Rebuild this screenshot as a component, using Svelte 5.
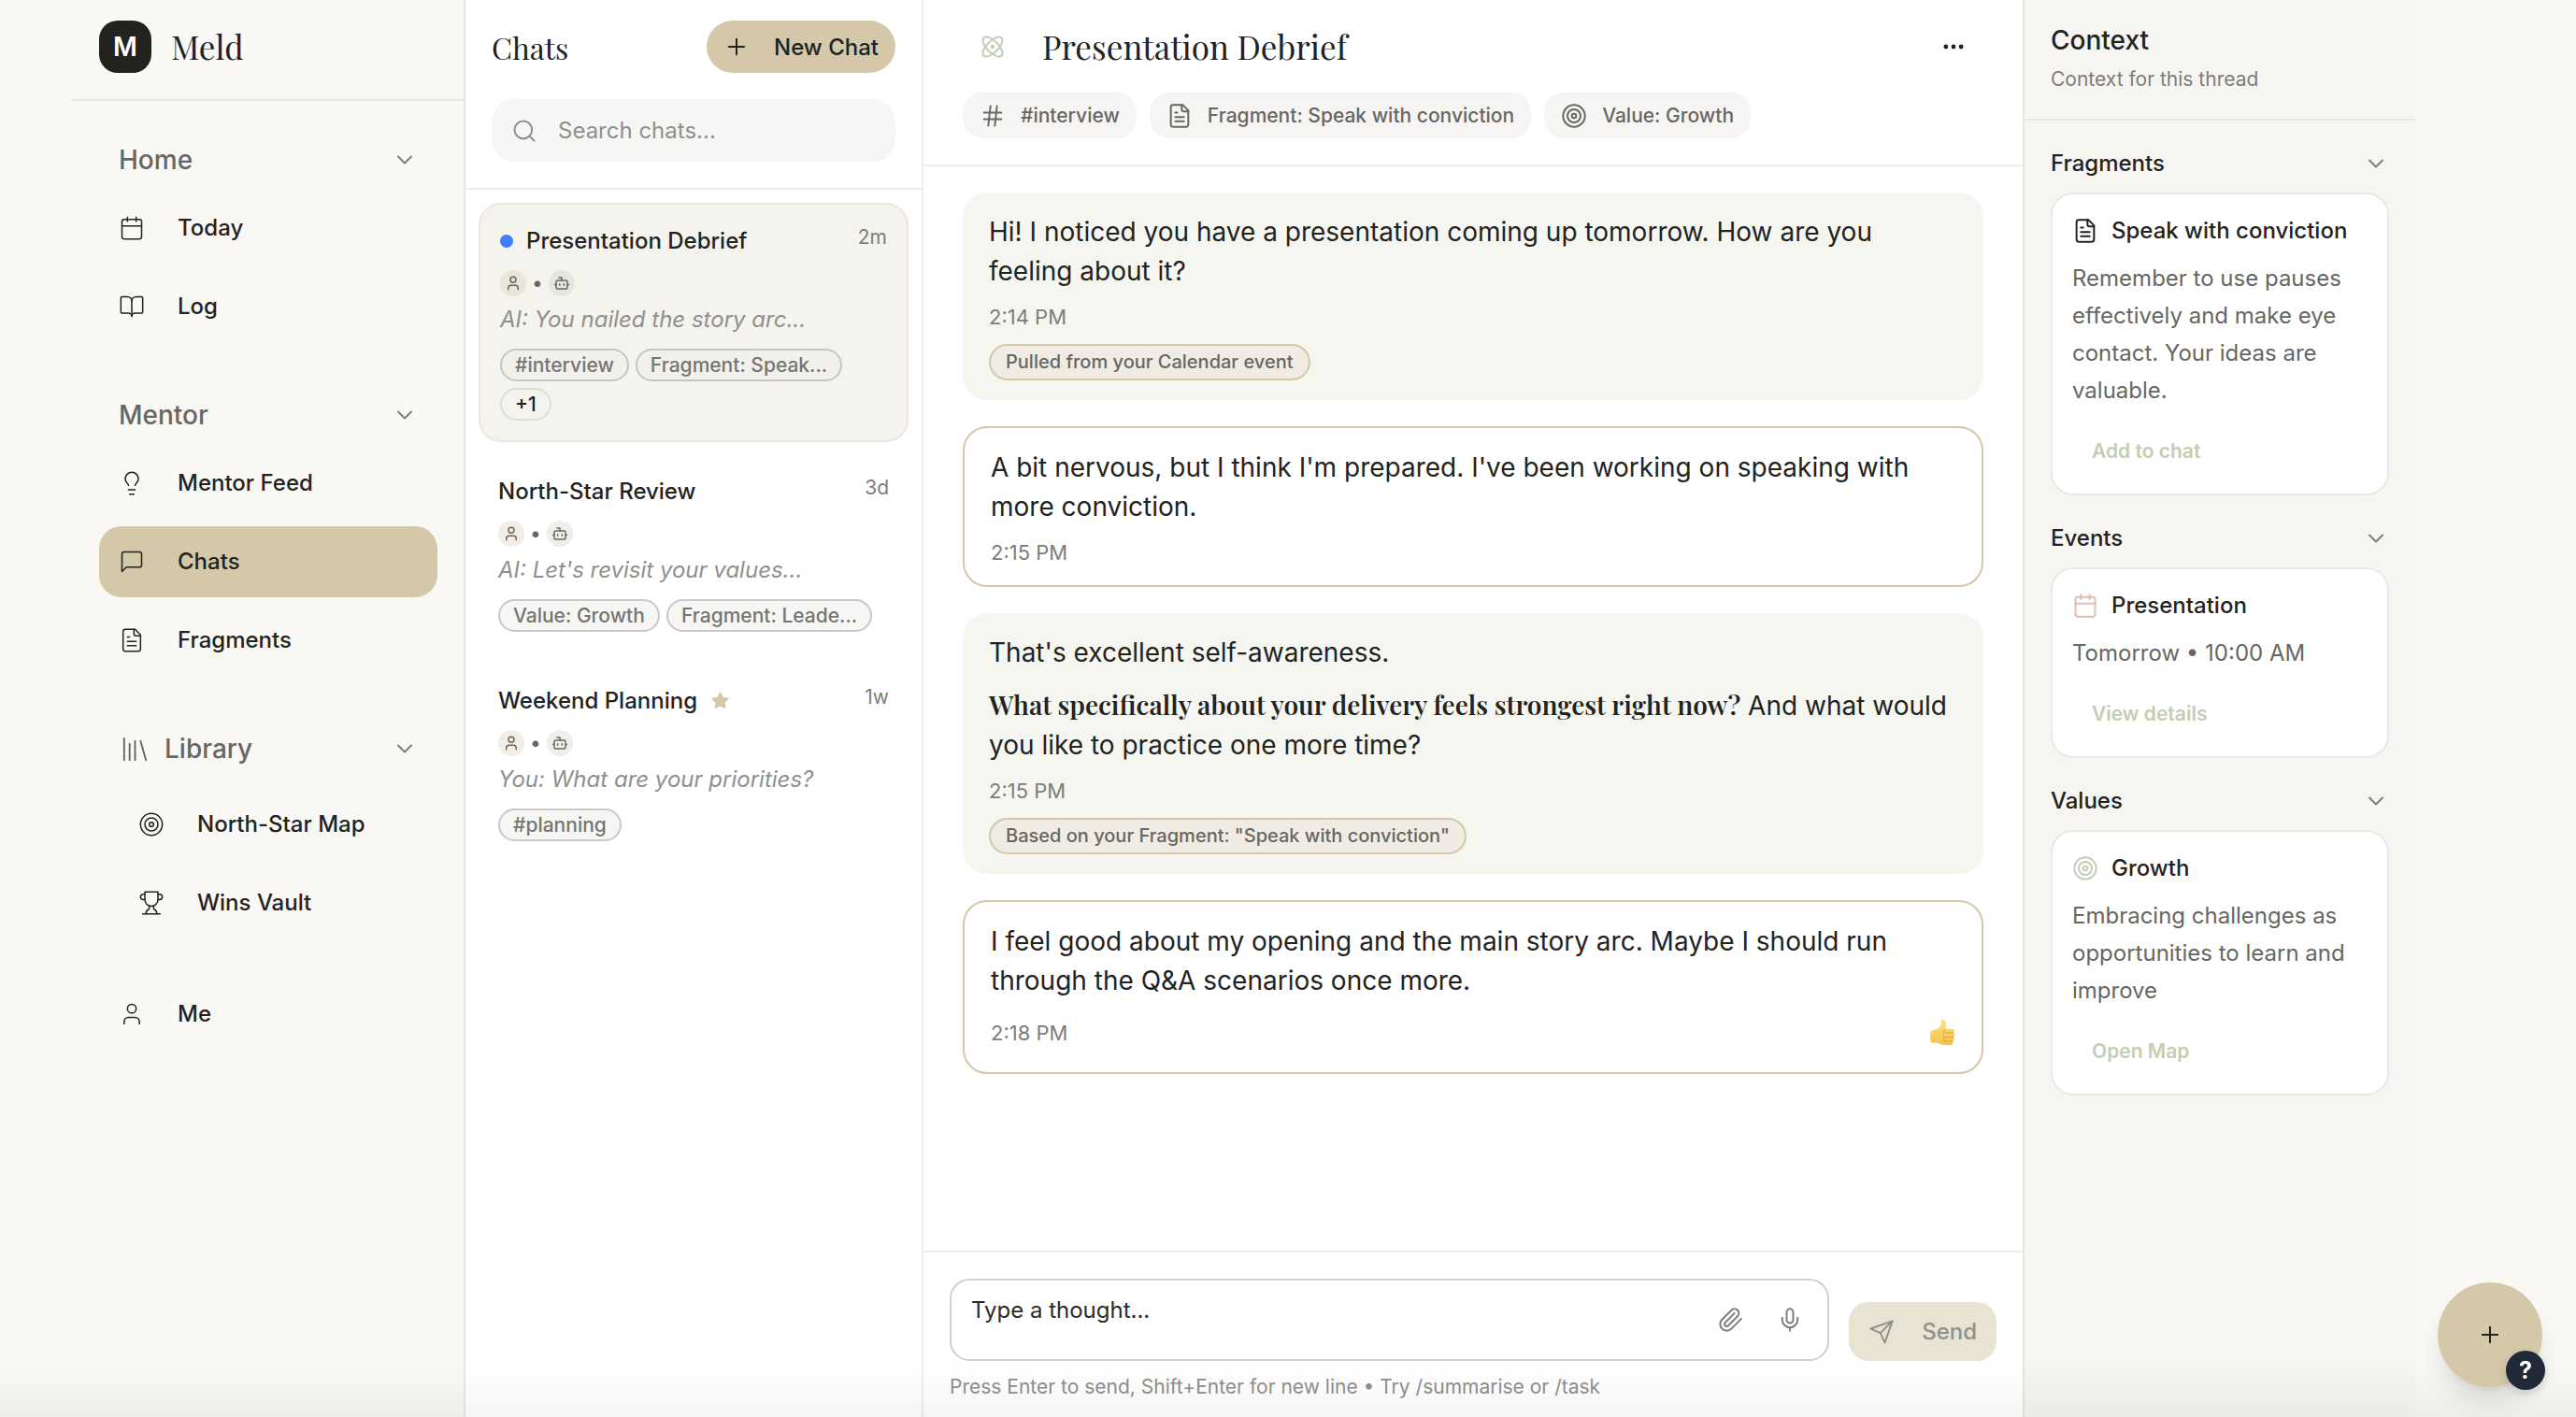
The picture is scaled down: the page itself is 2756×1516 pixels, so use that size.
<script lang="ts">
  const icons: Record<string, string> = {
    calendar: '<path d="M8 2v4M16 2v4M3 10h18"/><rect width="18" height="18" x="3" y="4" rx="2"/>',
    book: '<path d="M12 7v14"/><path d="M3 18a1 1 0 0 1-1-1V4a1 1 0 0 1 1-1h5a4 4 0 0 1 4 4 4 4 0 0 1 4-4h5a1 1 0 0 1 1 1v13a1 1 0 0 1-1 1h-6a3 3 0 0 0-3 3 3 3 0 0 0-3-3z"/>',
    bulb: '<path d="M15 14c.2-1 .7-1.7 1.5-2.5 1-.9 1.5-2.2 1.5-3.5A6 6 0 0 0 6 8c0 1 .2 2.2 1.5 3.5.7.7 1.3 1.5 1.5 2.5"/><path d="M9 18h6M10 22h4"/>',
    message: '<path d="M21 15a2 2 0 0 1-2 2H7l-4 4V5a2 2 0 0 1 2-2h14a2 2 0 0 1 2 2z"/>',
    file: '<path d="M15 2H6a2 2 0 0 0-2 2v16a2 2 0 0 0 2 2h12a2 2 0 0 0 2-2V7Z"/><path d="M14 2v4a2 2 0 0 0 2 2h4M10 9H8M16 13H8M16 17H8"/>',
    library: '<path d="m16 6 4 14M12 6v14M8 8v12M4 4v16"/>',
    target: '<circle cx="12" cy="12" r="10"/><circle cx="12" cy="12" r="6"/><circle cx="12" cy="12" r="2"/>',
    trophy: '<path d="M6 9H4.5a2.5 2.5 0 0 1 0-5H6M18 9h1.5a2.5 2.5 0 0 0 0-5H18M4 22h16"/><path d="M10 14.66V17c0 .55-.47.98-.97 1.21C7.85 18.75 7 20.24 7 22M14 14.66V17c0 .55.47.98.97 1.21C16.15 18.75 17 20.24 17 22"/><path d="M18 2H6v7a6 6 0 0 0 12 0V2Z"/>',
    user: '<path d="M19 21v-2a4 4 0 0 0-4-4H9a4 4 0 0 0-4 4v2"/><circle cx="12" cy="7" r="4"/>',
    bot: '<path d="M12 8V4H8"/><rect width="16" height="12" x="4" y="8" rx="2"/><path d="M2 14h2M20 14h2M15 13v2M9 13v2"/>',
    chevron: '<path d="m6 9 6 6 6-6"/>',
    plus: '<path d="M5 12h14M12 5v14"/>',
    search: '<circle cx="11" cy="11" r="8"/><path d="m21 21-4.3-4.3"/>',
    atom: '<circle cx="12" cy="12" r="1"/><path d="M20.2 20.2c2.04-2.03.02-7.36-4.5-11.9-4.54-4.52-9.87-6.54-11.9-4.5-2.04 2.03-.02 7.36 4.5 11.9 4.54 4.52 9.87 6.54 11.9 4.5Z"/><path d="M15.7 15.7c4.52-4.54 6.54-9.87 4.5-11.9-2.03-2.04-7.36-.02-11.9 4.5-4.52 4.54-6.54 9.87-4.5 11.9 2.03 2.04 7.36.02 11.9-4.5Z"/>',
    hash: '<path d="M4 9h16M4 15h16M10 3 8 21M16 3l-2 18"/>',
    more: '<g fill="currentColor"><circle cx="12" cy="12" r="1.2"/><circle cx="19" cy="12" r="1.2"/><circle cx="5" cy="12" r="1.2"/></g>',
    clip: '<path d="m21.44 11.05-9.19 9.19a6 6 0 0 1-8.49-8.49l8.57-8.57A4 4 0 1 1 18 8.84l-8.59 8.57a2 2 0 0 1-2.83-2.83l8.49-8.48"/>',
    mic: '<path d="M12 2a3 3 0 0 0-3 3v7a3 3 0 0 0 6 0V5a3 3 0 0 0-3-3Z"/><path d="M19 10v2a7 7 0 0 1-14 0v-2M12 19v3"/>',
    send: '<path d="m22 2-7 20-4-9-9-4ZM22 2 11 13"/>',
    star: '<path fill="currentColor" stroke-width="2.5" d="m12 3.200 2.700 5.800 6.300.8-4.600 4.300 1.200 6.200-5.600-3.100-5.600 3.100 1.200-6.200L3 9.800 9.300 9z"/>',
  };

  const groups = [
    { label: 'Home', items: [['calendar', 'Today'], ['book', 'Log']] },
    { label: 'Mentor', items: [['bulb', 'Mentor Feed'], ['message', 'Chats'], ['file', 'Fragments']] },
    { label: 'Library', icon: 'library', nested: true, items: [['target', 'North-Star Map'], ['trophy', 'Wins Vault']] },
  ];

  const chats = [
    { title: 'Presentation Debrief', time: '2m', preview: 'AI: You nailed the story arc...', tags: ['#interview', 'Fragment: Speak...'], more: '+1', unread: true, active: true },
    { title: 'North-Star Review', time: '3d', preview: "AI: Let's revisit your values...", tags: ['Value: Growth', 'Fragment: Leade...'] },
    { title: 'Weekend Planning', time: '1w', preview: 'You: What are your priorities?', tags: ['#planning'], starred: true },
  ];

  const links = [['hash', '#interview'], ['file', 'Fragment: Speak with conviction'], ['target', 'Value: Growth']];

  const context = [
    { heading: 'Fragments', icon: 'file', tone: 'ink', title: 'Speak with conviction', body: 'Remember to use pauses effectively and make eye contact. Your ideas are valuable.', action: 'Add to chat' },
    { heading: 'Events', icon: 'calendar', tone: 'rose', title: 'Presentation', body: 'Tomorrow • 10:00 AM', action: 'View details' },
    { heading: 'Values', icon: 'target', tone: 'sage', title: 'Growth', body: 'Embracing challenges as opportunities to learn and improve', action: 'Open Map' },
  ];

  let query = $state('');
  let draft = $state('');
</script>

{#snippet icon(name: string, cls = '')}
  <svg class="icon {cls}" viewBox="0 0 24 24" aria-hidden="true">{@html icons[name]}</svg>
{/snippet}

<div class="app">
  <aside class="sidebar">
    <div class="brand">
      <span class="logo">M</span>
      <span class="wordmark">Meld</span>
    </div>
    <nav>
      {#each groups as group}
        <section class="group">
          <button class="group-head">
            {#if group.icon}{@render icon(group.icon, 'large thin')}{/if}
            <span>{group.label}</span>
            {@render icon('chevron', 'push')}
          </button>
          <div class="links" class:nested={group.nested}>
            {#each group.items as [glyph, label]}
              <a href="#{label}" class="nav-link" class:active={label === 'Chats'}>
                {@render icon(glyph, 'thin')}
                <span>{label}</span>
              </a>
            {/each}
          </div>
        </section>
      {/each}
      <a href="#Me" class="nav-link">{@render icon('user', 'thin')}<span>Me</span></a>
    </nav>
  </aside>

  <section class="threads">
    <header class="threads-head">
      <div class="row">
        <h2>Chats</h2>
        <button class="new-chat">{@render icon('plus')}<span>New Chat</span></button>
      </div>
      <label class="search">
        {@render icon('search')}
        <input type="text" placeholder="Search chats..." aria-label="Search chats" bind:value={query} />
      </label>
    </header>
    <div class="thread-list">
      {#each chats as chat}
        <button class="thread" class:current={chat.active}>
          <span class="thread-top">
            {#if chat.unread}<span class="unread"></span>{/if}
            <span class="thread-title">{chat.title}</span>
            {#if chat.starred}{@render icon('star', 'small gold')}{/if}
            <time>{chat.time}</time>
          </span>
          <span class="people">
            <span class="avatar human">{@render icon('user', 'tiny')}</span>
            <span class="sep">•</span>
            <span class="avatar robot">{@render icon('bot', 'tiny')}</span>
          </span>
          <span class="preview">{chat.preview}</span>
          <span class="tags">
            {#each chat.tags as tag}<span class="tag">{tag}</span>{/each}
            {#if chat.more}<span class="tag count">{chat.more}</span>{/if}
          </span>
        </button>
      {/each}
    </div>
  </section>

  <main class="conversation">
    <header class="conv-head">
      <div class="conv-title">
        <span class="atom">{@render icon('atom')}</span>
        <h1>Presentation Debrief</h1>
        <button class="more" aria-label="More options">{@render icon('more')}</button>
      </div>
      <div class="conv-links">
        {#each links as [glyph, label]}
          <button class="chip">{@render icon(glyph)}<span>{label}</span></button>
        {/each}
      </div>
    </header>

    <div class="messages">
      <article class="msg ai">
        <p>Hi! I noticed you have a presentation coming up tomorrow. How are you feeling about it?</p>
        <div class="meta"><time>2:14 PM</time></div>
        <span class="source">Pulled from your Calendar event</span>
      </article>
      <article class="msg me">
        <p>A bit nervous, but I think I'm prepared. I've been working on speaking with more conviction.</p>
        <div class="meta"><time>2:15 PM</time></div>
      </article>
      <article class="msg ai">
        <p>That's excellent self-awareness.</p>
        <p><strong>What specifically about your delivery feels strongest right now?</strong> And what would you like to practice one more time?</p>
        <div class="meta"><time>2:15 PM</time></div>
        <span class="source">Based on your Fragment: "Speak with conviction"</span>
      </article>
      <article class="msg me">
        <p>I feel good about my opening and the main story arc. Maybe I should run through the Q&amp;A scenarios once more.</p>
        <div class="meta">
          <time>2:18 PM</time>
          <button class="reaction" aria-label="Thumbs up">
            <svg viewBox="0 0 28 26" preserveAspectRatio="none" aria-hidden="true">
              <defs>
                <linearGradient id="skin" x1="0" y1="0" x2="0" y2="1">
                  <stop offset="0" stop-color="#fde07a" />
                  <stop offset="1" stop-color="#f5c24c" />
                </linearGradient>
              </defs>
              <path fill="url(#skin)" d="M2 12c1-1.600 4.500-1.400 6.500-2.600C11 8 13.500 6 12.600 3.300 12.200 1.600 13 .6 14.600.7c2.800.2 3.900 3 3.400 5.800-.2 1.300-.6 2-.6 2.800h7.400c2.300 0 2.700 3 1 3.700 2 .8 1.700 3.700 0 4.100 1.400 1 .9 3.400-.7 3.800.9 1 .3 3.200-1.600 3.300-3.500.4-8 .4-11-.5-2.500-.7-3.500-1.500-6-1.500-2.200 0-4 .3-4.700-1C.8 18.500.9 14 2 12z" />
              <path fill="none" stroke="#d99b33" stroke-width=".8" stroke-linecap="round" d="M17.500 13h8M17.200 17.100h8.300M17 20.900h7.700M17.300 9.600c-1.500 1-2 2.500-1.200 3.600-.8 1.300-.8 3 .2 4-.6 1.200-.5 2.700.4 3.600" />
            </svg>
          </button>
        </div>
      </article>
    </div>

    <footer class="composer">
      <div class="compose-row">
        <div class="field">
          <textarea rows="1" placeholder="Type a thought..." aria-label="Message" bind:value={draft}></textarea>
          <button aria-label="Attach file">{@render icon('clip')}</button>
          <button aria-label="Record voice">{@render icon('mic')}</button>
        </div>
        <button class="send">{@render icon('send')}<span>Send</span></button>
      </div>
      <p class="hint">Press Enter to send, Shift+Enter for new line • Try /summarise or /task</p>
    </footer>
  </main>

  <aside class="context">
    <header>
      <h2>Context</h2>
      <p>Context for this thread</p>
    </header>
    <div class="context-body">
      {#each context as item}
        <section>
          <button class="context-head"><span>{item.heading}</span>{@render icon('chevron', 'push')}</button>
          <div class="card">
            <h3>{@render icon(item.icon, item.tone)}<span>{item.title}</span></h3>
            <p>{item.body}</p>
            <button class="action">{item.action}</button>
          </div>
        </section>
      {/each}
    </div>
  </aside>
</div>

<div class="shade"></div>
<div class="floating">
  <button class="fab" aria-label="Create">{@render icon('plus')}</button>
  <button class="help" aria-label="Help">?</button>
</div>

<style>
  :global(body) {
    margin: 0;
    background: #f9f8f4;
    color: #22231f;
    font-family: Inter, 'Liberation Sans', sans-serif;
    font-size: 28px;
    line-height: 42px;
  }
  :global(*) { box-sizing: border-box; }
  h1, h2, h3, p { margin: 0; font-weight: 400; }
  button, input, textarea {
    font: inherit;
    color: inherit;
    border: 0;
    background: none;
    padding: 0;
    margin: 0;
    text-align: left;
  }
  button { cursor: pointer; }
  a { color: inherit; text-decoration: none; }

  .icon {
    width: 28px;
    height: 28px;
    flex: none;
    display: block;
    fill: none;
    stroke: currentColor;
    stroke-width: 1.7;
    stroke-linecap: round;
    stroke-linejoin: round;
  }
  .thin { stroke-width: 1.3; }
  .large { width: 35px; height: 35px; }
  .small { width: 21px; height: 21px; }
  .tiny { width: 18px; height: 18px; stroke-width: 2; }
  .push { margin-left: auto; color: #7d7d79; }
  .gold { color: #d4c8a8; }
  .ink { color: #22231f; }
  .rose { color: #e3bdb3; }
  .sage { color: #c3ceb4; }

  .app {
    display: flex;
    min-height: 100vh;
    padding: 0 172px 0 78px;
  }

  .sidebar {
    width: 420px;
    flex: none;
    border-right: 2px solid #e6e7e2;
  }
  .brand {
    display: flex;
    align-items: center;
    gap: 21px;
    padding: 22px 28px 28px;
    border-bottom: 2px solid #e6e7e2;
  }
  .logo {
    width: 56px;
    height: 56px;
    display: grid;
    place-items: center;
    border-radius: 20px;
    background: #22231f;
    color: #fff;
    font-weight: 600;
  }
  .wordmark, h1, .threads h2, strong {
    font-family: 'Playfair Display', 'Liberation Serif', serif;
  }
  .wordmark { font-size: 35px; }
  nav {
    display: flex;
    flex-direction: column;
    gap: 43px;
    padding: 28px;
  }
  .group-head {
    display: flex;
    align-items: center;
    gap: 14px;
    width: 100%;
    height: 70px;
    padding: 0 21px;
    font-weight: 500;
    color: #666762;
  }
  .links { display: flex; flex-direction: column; gap: 8px; }
  .nested { padding-top: 8px; }
  .nav-link {
    display: flex;
    align-items: center;
    gap: 35px;
    height: 76px;
    padding: 0 21px;
    border-radius: 24px;
    font-size: 24px;
    font-weight: 500;
  }
  .nested .nav-link { padding-left: 42px; }
  .active { background: #d4c8a8; }

  .threads {
    width: 490px;
    flex: none;
    background: #fff;
    border-right: 2px solid #eeeeed;
    font-size: 24px;
    line-height: 35px;
  }
  .threads-head {
    padding: 22px 28px 28px;
    border-bottom: 2px solid #eeeeed;
  }
  .row { display: flex; align-items: center; justify-content: space-between; }
  .threads h2 { font-size: 32px; }
  .new-chat {
    display: flex;
    align-items: center;
    gap: 26px;
    height: 56px;
    padding: 0 18px;
    border-radius: 28px;
    background: #d4c8a8;
    font-weight: 500;
  }
  .search {
    display: flex;
    align-items: center;
    gap: 22px;
    height: 67px;
    margin-top: 28px;
    padding: 0 21px;
    border-radius: 24px;
    background: #f6f6f5;
    color: #8f908d;
  }
  .search input { flex: 1; min-width: 0; outline: none; }
  .search input::placeholder { color: #8f908d; opacity: 1; }
  .thread-list {
    display: flex;
    flex-direction: column;
    gap: 14px;
    padding: 14px;
  }
  .thread {
    display: flex;
    flex-direction: column;
    padding: 21px;
    border-radius: 24px;
  }
  .current { background: #f5f3ee; border: 2px solid #ede7da; }
  .thread-top { display: flex; align-items: center; gap: 14px; }
  .unread { width: 14px; height: 14px; border-radius: 50%; background: #437dfb; }
  .thread-title { font-weight: 500; }
  .thread-top time {
    margin-left: auto;
    align-self: flex-start;
    font-size: 21px;
    line-height: 28px;
    color: #7d7d79;
  }
  .people {
    display: flex;
    align-items: center;
    gap: 6px;
    margin-top: 14px;
    height: 28px;
    color: #666762;
  }
  .sep { font-size: 21px; line-height: 28px; }
  .avatar {
    width: 28px;
    height: 28px;
    display: grid;
    place-items: center;
    border-radius: 50%;
  }
  .human { background: rgb(212 200 168 / 30%); }
  .robot { background: rgb(195 206 180 / 30%); }
  .preview { margin-top: 7px; font-style: italic; color: #8f908d; }
  .tags { display: flex; flex-wrap: wrap; gap: 7px; margin-top: 14px; }
  .tag {
    padding: 0 14px;
    border: 2px solid #c8c8c6;
    border-radius: 18px;
    background: #f6f6f5;
    font-size: 21px;
    line-height: 31px;
    font-weight: 500;
    color: #75766f;
  }
  .current .tag { background: #f2f0ec; border-color: #c6c5c0; }
  .current .count { color: #22231f; background: none; border-color: #dfddd8; }

  .conversation {
    flex: 1;
    min-width: 0;
    display: flex;
    flex-direction: column;
    background: #fff;
  }
  .conv-head {
    padding: 22px 42px 28px;
    border-bottom: 2px solid #eeeeed;
  }
  .conv-title { display: flex; align-items: center; height: 56px; }
  .atom {
    width: 64px;
    margin-right: 21px;
    display: grid;
    place-items: center;
    color: #c3ceb4;
  }
  h1 { font-size: 35px; }
  .more {
    margin-left: auto;
    width: 64px;
    height: 56px;
    display: grid;
    place-items: center;
  }
  .conv-links { display: flex; flex-wrap: wrap; gap: 14px; margin-top: 21px; }
  .chip {
    display: flex;
    align-items: center;
    gap: 16px;
    height: 49px;
    padding: 0 18px;
    border-radius: 21px;
    background: #f6f5f4;
    font-size: 21px;
    font-weight: 500;
    color: #666762;
  }
  .messages {
    flex: 1;
    display: flex;
    flex-direction: column;
    gap: 28px;
    padding: 28px 42px;
  }
  .msg { padding: 21px 28px; border-radius: 26px; }
  .ai { background: #f6f6f1; }
  .me { border: 2px solid #d4c8a8; }
  .msg p + p { margin-top: 14px; }
  strong { font-weight: 600; }
  .meta {
    display: flex;
    align-items: center;
    justify-content: space-between;
    margin-top: 14px;
    font-size: 22px;
    line-height: 28px;
    color: #7d7d79;
  }
  .source {
    display: block;
    width: fit-content;
    margin-top: 15px;
    padding: 0 16px;
    border: 2px solid #d4c8a8;
    border-radius: 20px;
    background: #f0ece4;
    font-size: 20px;
    line-height: 35px;
    font-weight: 500;
    color: #666762;
  }
  .reaction { height: 42px; display: grid; place-items: center; }
  .reaction svg { width: 28px; height: 30px; display: block; }

  .composer {
    padding: 28px 28px 18px;
    border-top: 2px solid #eeeeed;
    font-size: 24px;
    line-height: 35px;
  }
  .compose-row { display: flex; align-items: flex-end; gap: 21px; }
  .field {
    flex: 1;
    display: flex;
    align-items: center;
    gap: 35px;
    height: 88px;
    padding: 0 26px 0 21px;
    border: 2px solid #d0d0cf;
    border-radius: 21px;
    color: #7d7d79;
  }
  textarea {
    flex: 1;
    height: 56px;
    resize: none;
    outline: none;
    overflow: hidden;
    color: #2a2a28;
  }
  textarea::placeholder { color: #2a2a28; opacity: 1; }
  .send {
    display: flex;
    align-items: center;
    gap: 29px;
    height: 63px;
    padding: 0 21px;
    border-radius: 21px;
    background: #e9e3d3;
    font-weight: 500;
    color: #90918c;
  }
  .hint { margin-top: 14px; font-size: 21px; line-height: 28px; color: #8f908d; }

  .context {
    width: 420px;
    flex: none;
    background: #f7f5f1;
    border-left: 2px solid #e6e5e2;
  }
  .context header {
    padding: 22px 28px 28px;
    border-bottom: 2px solid #e6e5e2;
  }
  .context h2 { font-size: 28px; font-weight: 500; }
  .context header p {
    margin-top: 7px;
    font-size: 21px;
    line-height: 28px;
    color: #7d7d79;
  }
  .context-body {
    display: flex;
    flex-direction: column;
    gap: 28px;
    padding: 28px;
    font-size: 24px;
    line-height: 35px;
  }
  .context-head {
    display: flex;
    align-items: center;
    width: 100%;
    font-weight: 500;
  }
  .card {
    margin-top: 14px;
    padding: 21px;
    border: 2px solid #e9e9e8;
    border-radius: 24px;
    background: #fff;
  }
  .card h3 {
    display: flex;
    align-items: center;
    gap: 14px;
    font-size: 24px;
    font-weight: 500;
  }
  .card p { margin-top: 14px; line-height: 40px; color: #666762; }
  .action {
    display: block;
    height: 49px;
    margin-top: 20px;
    padding: 0 21px;
    font-size: 21px;
    font-weight: 600;
    color: #c3ceb4;
  }

  .shade {
    position: fixed;
    inset: auto 0 0 0;
    height: 56px;
    pointer-events: none;
    background: linear-gradient(to bottom, rgb(0 0 0 / 0%), rgb(0 0 0 / 4%));
  }
  .floating { position: fixed; right: 36px; bottom: 32px; }
  .fab {
    width: 112px;
    height: 112px;
    display: grid;
    place-items: center;
    border-radius: 50%;
    background: #d4c8a8;
    box-shadow: 0 20px 30px -6px rgb(0 0 0 / 12%), 0 8px 12px -8px rgb(0 0 0 / 12%);
  }
  .help {
    position: absolute;
    right: -3px;
    bottom: -3px;
    width: 42px;
    height: 42px;
    border-radius: 50%;
    background: #1f2937;
    color: #fff;
    font-size: 25px;
    line-height: 42px;
    font-weight: 700;
    text-align: center;
    box-shadow: 0 4px 10px rgb(0 0 0 / 15%);
  }
</style>
